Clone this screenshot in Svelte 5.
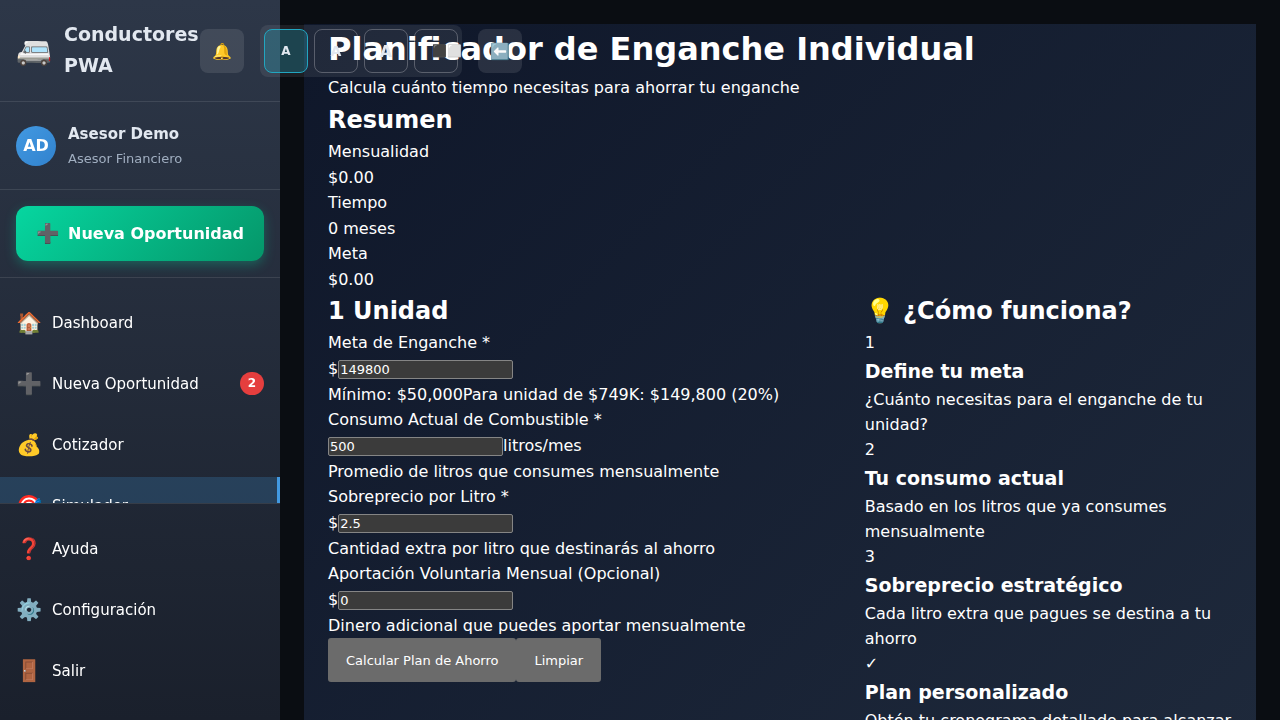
<script>
  const menu = [
    { icon: '🏠', label: 'Dashboard' },
    { icon: '➕', label: 'Nueva Oportunidad', badge: 2 },
    { icon: '💰', label: 'Cotizador' },
    { icon: '🎯', label: 'Simulador', active: true }
  ];
  const secondary = [
    { icon: '❓', label: 'Ayuda' },
    { icon: '⚙️', label: 'Configuración' },
    { icon: '🚪', label: 'Salir' }
  ];
  const summary = [
    { label: 'Mensualidad', value: '$0.00' },
    { label: 'Tiempo', value: '0 meses' },
    { label: 'Meta', value: '$0.00' }
  ];
  const fields = $state([
    { id: 'meta', label: 'Meta de Enganche *', prefix: '$', value: '149800', hints: ['Mínimo: $50,000', 'Para unidad de $749K: $149,800 (20%)'] },
    { id: 'consumo', label: 'Consumo Actual de Combustible *', suffix: 'litros/mes', value: '500', hints: ['Promedio de litros que consumes mensualmente'] },
    { id: 'sobreprecio', label: 'Sobreprecio por Litro *', prefix: '$', value: '2.5', hints: ['Cantidad extra por litro que destinarás al ahorro'] },
    { id: 'aportacion', label: 'Aportación Voluntaria Mensual (Opcional)', prefix: '$', value: '0', hints: ['Dinero adicional que puedes aportar mensualmente'] }
  ]);
  const steps = [
    { mark: '1', title: 'Define tu meta', text: '¿Cuánto necesitas para el enganche de tu unidad?' },
    { mark: '2', title: 'Tu consumo actual', text: 'Basado en los litros que ya consumes mensualmente' },
    { mark: '3', title: 'Sobreprecio estratégico', text: 'Cada litro extra que pagues se destina a tu ahorro' },
    { mark: '✓', title: 'Plan personalizado', text: 'Obtén tu cronograma detallado para alcanzar tu meta' }
  ];
</script>

{#snippet item(entry)}
  <li>
    <a href="#top" class:active={entry.active}>
      <span class="icon">{entry.icon}</span>
      <span class="label">{entry.label}</span>
      {#if entry.badge}<span class="badge">{entry.badge}</span>{/if}
    </a>
  </li>
{/snippet}

<div class="shell">
  <aside class="sidebar">
    <div class="brand">
      <span class="logo">🚐</span>
      <span class="name">Conductores PWA</span>
    </div>
    <div class="user">
      <div class="avatar">AD</div>
      <div>
        <div class="user-name">Asesor Demo</div>
        <div class="user-role">Asesor Financiero</div>
      </div>
    </div>
    <div class="cta">
      <button type="button"><span class="icon">➕</span>Nueva Oportunidad</button>
    </div>
    <nav>
      <ul>{#each menu as entry}{@render item(entry)}{/each}</ul>
    </nav>
    <div class="bottom">
      <ul>{#each secondary as entry}{@render item(entry)}{/each}</ul>
    </div>
  </aside>

  <main>
    <div class="page">
      <header>
        <h1>Planificador de Enganche Individual</h1>
        <p>Calcula cuánto tiempo necesitas para ahorrar tu enganche</p>
      </header>
      <section class="summary">
        <h2>Resumen</h2>
        {#each summary as row}
          <div class="caption">{row.label}</div>
          <div class="amount">{row.value}</div>
        {/each}
      </section>
      <div class="columns">
        <form>
          <h2>1 Unidad</h2>
          {#each fields as field}
            <div class="group">
              <label for={field.id}>{field.label}</label>
              <div class="control">
                {#if field.prefix}<span>{field.prefix}</span>{/if}<input id={field.id} type="text" inputmode="decimal" bind:value={field.value} />{#if field.suffix}<span>{field.suffix}</span>{/if}
              </div>
              <div class="hint">{#each field.hints as hint}<span>{hint}</span>{/each}</div>
            </div>
          {/each}
          <div class="actions">
            <button type="button">Calcular Plan de Ahorro</button>
            <button type="button">Limpiar</button>
          </div>
        </form>
        <aside class="how">
          <h2>💡 ¿Cómo funciona?</h2>
          {#each steps as step}
            <div class="mark">{step.mark}</div>
            <h3>{step.title}</h3>
            <p>{step.text}</p>
          {/each}
        </aside>
      </div>
    </div>
  </main>

  <div class="toolbar">
    <button type="button" class="tool" aria-label="Notificaciones">🔔</button>
    <div class="sizes">
      <button type="button" class="selected">A</button>
      <button type="button" class="medium">A</button>
      <button type="button" class="large">A</button>
      <button type="button" class="contrast" aria-label="Contraste">⬛⬜</button>
    </div>
    <button type="button" class="tool" aria-label="Volver">⬅️</button>
  </div>
</div>

<style>
  :global(body) {
    background: #0a0d12;
    color: #fff;
    font-family: "DejaVu Sans", sans-serif;
    font-size: 16px;
    line-height: 26px;
  }
  .shell {
    display: flex;
    height: 100vh;
    overflow: hidden;
  }
  h1, h2, h3, p, ul {
    margin: 0;
    padding: 0;
  }
  ul {
    list-style: none;
  }
  button, input {
    font-family: inherit;
    color: inherit;
    box-sizing: border-box;
  }

  .sidebar {
    display: flex;
    flex-direction: column;
    flex: 0 0 280px;
    background: linear-gradient(180deg, #2d3748 0%, #1a202c 100%);
    will-change: transform;
  }
  .brand {
    display: flex;
    align-items: center;
    gap: 12px;
    padding: 19px 64px 20px 16px;
    border-bottom: 1px solid rgba(255, 255, 255, 0.1);
  }
  .logo {
    font-size: 29px;
    line-height: 46px;
  }
  .name {
    color: #e2e8f0;
    font-size: 19px;
    font-weight: 700;
    line-height: 31px;
  }
  .user {
    display: flex;
    align-items: center;
    gap: 12px;
    padding: 19px 16px;
    border-bottom: 1px solid rgba(255, 255, 255, 0.1);
  }
  .avatar {
    display: grid;
    place-items: center;
    width: 40px;
    height: 40px;
    border-radius: 50%;
    background: linear-gradient(135deg, #4299e1, #3182ce);
    font-weight: 700;
  }
  .user-name {
    color: #e2e8f0;
    font-size: 15px;
    font-weight: 700;
    line-height: 26px;
  }
  .user-role {
    color: #a0aec0;
    font-size: 13px;
    line-height: 23px;
  }
  .cta {
    padding: 16px;
    border-bottom: 1px solid rgba(255, 255, 255, 0.1);
  }
  .cta button {
    display: flex;
    align-items: center;
    justify-content: center;
    gap: 8px;
    width: 100%;
    height: 55px;
    padding: 0;
    border: 0;
    border-radius: 12px;
    background: linear-gradient(135deg, #06d6a0, #059669);
    box-shadow: 0 4px 12px rgba(6, 214, 160, 0.3);
    color: #fff;
    font-size: 16px;
    font-weight: 700;
  }
  .cta .icon {
    font-size: 19px;
  }
  nav {
    flex: 1 1 0;
    min-height: 0;
    padding: 16px 0 0;
    overflow: hidden;
  }
  .bottom {
    padding: 16px 0 17px;
    border-top: 1px solid rgba(255, 255, 255, 0.1);
  }
  li {
    margin-bottom: 4px;
  }
  li a {
    display: flex;
    align-items: center;
    gap: 12px;
    height: 57px;
    padding: 0 16px;
    box-sizing: border-box;
    color: #fff;
    font-size: 15px;
    text-decoration: none;
  }
  li a.active {
    padding-right: 13px;
    border-right: 3px solid #4299e1;
    background: rgba(66, 153, 225, 0.22);
  }
  li .icon {
    width: 24px;
    font-size: 21px;
    text-align: center;
  }
  .label {
    flex: 1;
  }
  .badge {
    min-width: 24px;
    border-radius: 12px;
    background: #e53e3e;
    font-size: 12px;
    font-weight: 700;
    line-height: 23px;
    text-align: center;
  }

  main {
    flex: 1;
    min-width: 0;
    padding: 24px;
    overflow: hidden;
  }
  .page {
    padding: 0 24px;
    background: linear-gradient(135deg, #0f172a, #1e293b);
  }
  h1 {
    font-size: 32px;
    line-height: 51px;
  }
  h2 {
    font-size: 24px;
    line-height: 38px;
  }
  h3 {
    font-size: 19px;
    line-height: 31px;
  }
  .amount, .hint {
    line-height: 25px;
  }
  .columns {
    display: grid;
    grid-template-columns: minmax(0, 19fr) minmax(0, 13fr);
  }
  label {
    display: block;
  }
  .control {
    display: flex;
    align-items: center;
    height: 26px;
  }
  input {
    width: 175px;
    height: 19px;
    padding: 1px;
    border: 1px solid #858585;
    border-radius: 2px;
    background: #3b3b3b;
    font-size: 13px;
  }
  .actions {
    display: flex;
  }
  .actions button {
    height: 44px;
    padding: 0 18px;
    border: 0;
    border-radius: 3px;
    background: #6b6b6b;
    font-size: 13px;
  }
  .how p {
    line-height: 25px;
  }

  .toolbar {
    position: absolute;
    top: 25px;
    left: 200px;
    display: flex;
    align-items: center;
    gap: 16px;
    will-change: transform;
  }
  .toolbar button {
    width: 44px;
    height: 44px;
    padding: 0;
    border-radius: 8px;
    color: #e2e8f0;
  }
  .tool {
    border: 0;
    background: rgba(255, 255, 255, 0.1);
    font-size: 16px;
  }
  .sizes {
    display: flex;
    gap: 6px;
    padding: 4px;
    border-radius: 8px;
    background: rgba(255, 255, 255, 0.08);
  }
  .sizes button {
    border: 1px solid rgba(255, 255, 255, 0.25);
    background: transparent;
    font-size: 12px;
    font-weight: 700;
  }
  .sizes .selected {
    border-color: #22a6c0;
    background: rgba(34, 166, 192, 0.28);
  }
  .sizes .medium {
    font-size: 14px;
  }
  .sizes .large {
    font-size: 16px;
  }
  .sizes .contrast {
    padding-left: 17px;
    white-space: nowrap;
  }
</style>
